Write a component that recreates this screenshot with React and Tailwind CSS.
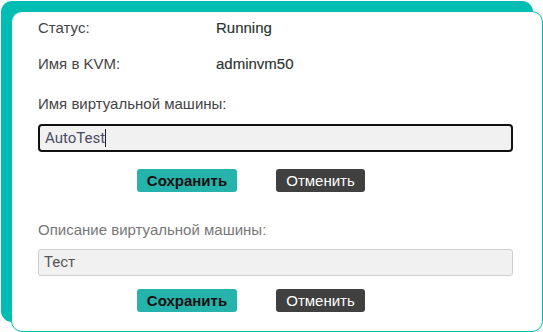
export default function App() {
  const font = { fontFamily: '"Liberation Sans", Arial, sans-serif' };
  return (
    <div className="w-[543px] h-[332px] overflow-hidden bg-white" style={font}>
      <div className="ml-[11px] mt-[11px] w-[532px] h-[321px] bg-white border border-[#00bdb4] rounded-[11px] shadow-[-10px_-10px_0_0_#00bdb4] pl-[26px] pr-[30px]">
        <div className="flex items-center h-[32px] text-[15px] text-[#444]">
          <span className="w-[178px]">Статус:</span>
          <span className="text-[#2a3333] [-webkit-text-stroke:0.15px_#2a3333]">Running</span>
        </div>
        <div className="flex items-center h-[40px] text-[15px] text-[#444]">
          <span className="w-[178px]">Имя в KVM:</span>
          <span className="text-[#2a3333] [-webkit-text-stroke:0.15px_#2a3333]">adminvm50</span>
        </div>
        <div className="flex items-center h-[41px] text-[15px] text-[#444]">
          Имя виртуальной машины:
        </div>
        <div className="-mt-[1px] h-[28px] w-[475px] border-2 border-[#111] rounded-[4px] bg-[#f1f1f1] flex items-center pl-[5px] text-[15px] text-[#4a4a66]" style={{ fontFamily: 'Roboto, sans-serif' }}>
          AutoTest<span className="inline-block w-[1px] h-[18px] bg-[#222]"></span>
        </div>
        <div className="flex mt-[17px] pl-[99px] gap-[39px]">
          <button className="w-[100px] h-[23px] bg-[#26b3ab] rounded-[3px] text-[15px] font-bold text-[#111] leading-none">Сохранить</button>
          <button className="w-[89px] h-[23px] bg-[#404040] rounded-[3px] text-[15px] text-white leading-none">Отменить</button>
        </div>
        <div className="flex items-center h-[57px] pt-[20px] text-[15px] text-[#777]">
          Описание виртуальной машины:
        </div>
        <div className="h-[27px] w-[475px] border border-[#cfcfcf] rounded-[3px] bg-[#f1f1f1] flex items-center pl-[5px] text-[15px] text-[#555]" style={{ fontFamily: 'Roboto, sans-serif' }}>
          Тест
        </div>
        <div className="flex mt-[13px] pl-[99px] gap-[39px]">
          <button className="w-[100px] h-[23px] bg-[#26b3ab] rounded-[3px] text-[15px] font-bold text-[#111] leading-none">Сохранить</button>
          <button className="w-[89px] h-[23px] bg-[#404040] rounded-[3px] text-[15px] text-white leading-none">Отменить</button>
        </div>
      </div>
    </div>
  );
}
